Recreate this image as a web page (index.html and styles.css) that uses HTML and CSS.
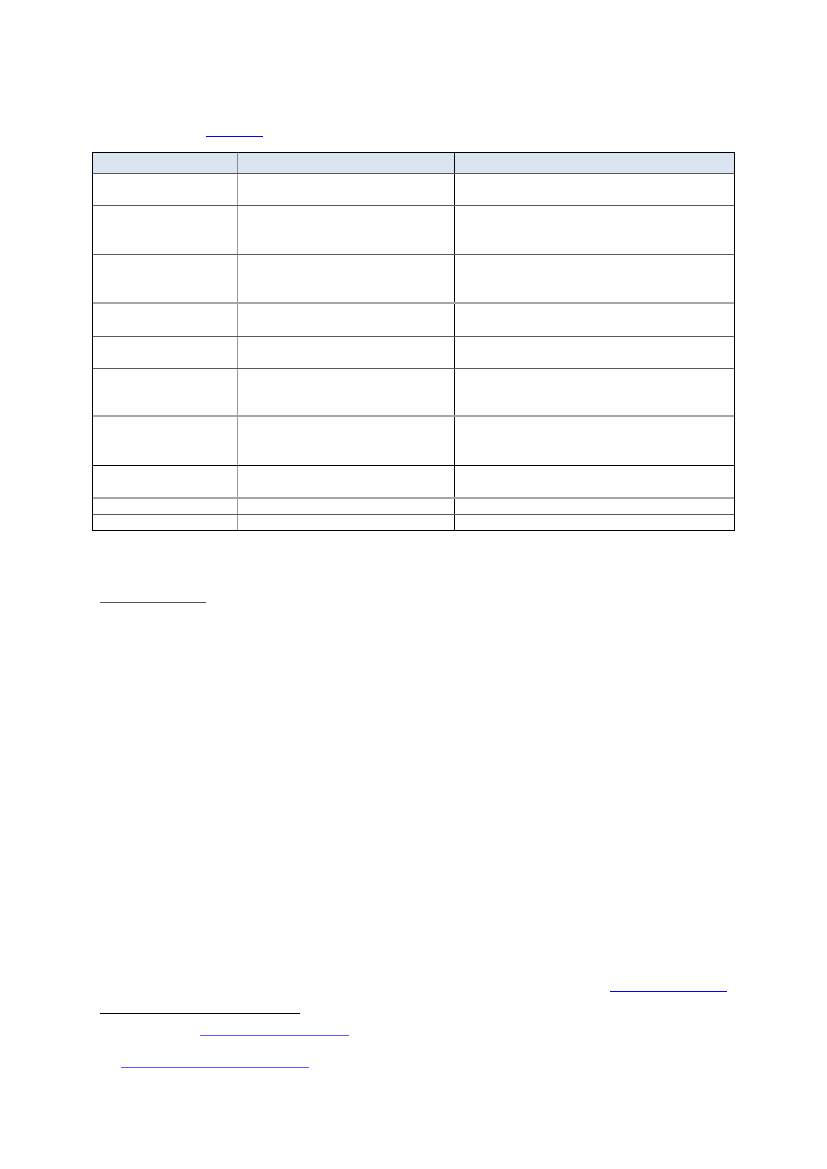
FILE: index.html
```html
<!DOCTYPE html>
<html lang="en">
<head>
<meta charset="utf-8">
<title>Document</title>
<link rel="stylesheet" href="styles.css">
</head>
<body>
<div class="page">
  <div class="rule link-top"></div>
  <div class="table">
    <div class="row head h21"><div class="cell c1"></div><div class="cell c2"></div><div class="cell c3"></div></div>
    <div class="row dark h32"><div class="cell c1"></div><div class="cell c2"></div><div class="cell c3"></div></div>
    <div class="row dark h49"><div class="cell c1"></div><div class="cell c2"></div><div class="cell c3"></div></div>
    <div class="row light h49"><div class="cell c1"></div><div class="cell c2"></div><div class="cell c3"></div></div>
    <div class="row dark h33"><div class="cell c1"></div><div class="cell c2"></div><div class="cell c3"></div></div>
    <div class="row dark h32"><div class="cell c1"></div><div class="cell c2"></div><div class="cell c3"></div></div>
    <div class="row light h48"><div class="cell c1"></div><div class="cell c2"></div><div class="cell c3"></div></div>
    <div class="row black h49"><div class="cell c1"></div><div class="cell c2"></div><div class="cell c3"></div></div>
    <div class="row light h33"><div class="cell c1"></div><div class="cell c2"></div><div class="cell c3"></div></div>
    <div class="row dark h16"><div class="cell c1"></div><div class="cell c2"></div><div class="cell c3"></div></div>
    <div class="row last h15"><div class="cell c1"></div><div class="cell c2"></div><div class="cell c3"></div></div>
  </div>
  <div class="rule footnote-line"></div>
  <div class="rule ref-a"></div>
  <div class="rule ref-b"></div>
  <div class="rule ref-c"></div>
  <div class="rule ref-d"></div>
</div>
</body>
</html>
```
FILE: styles.css
```css
html, body {
  margin: 0;
  padding: 0;
  background: #ffffff;
  font-family: "Liberation Sans", Arial, sans-serif;
}

.page {
  width: 827px;
  min-height: 1169px;
  display: flex;
  flex-direction: column;
  align-items: flex-start;
}

.rule {
  height: 0;
  border-top: 1px solid #0000ff;
}

.link-top {
  margin: 136px 0 0 206px;
  width: 57px;
}

.table {
  margin: 15px 0 0 92px;
  width: 643px;
  box-sizing: border-box;
  border: 1px solid #000000;
  display: flex;
  flex-direction: column;
}

.row {
  display: grid;
  grid-template-columns: 144px 217px 1fr;
  box-sizing: border-box;
}

.cell {
  box-sizing: border-box;
}

.c2 {
  border-left: 1px solid #9a9a9a;
}

.c3 {
  border-left: 1px solid #000000;
}

.head {
  background: #dbe5f1;
  border-bottom: 1px solid #555555;
}

.head .c2 {
  border-left-color: #8a8a8a;
}

.dark {
  border-bottom: 1px solid #5a5a5a;
}

.light {
  border-bottom: 2px solid #a6a6a6;
}

.black {
  border-bottom: 1px solid #000000;
}

.h15 { height: 15px; }
.h16 { height: 16px; }
.h21 { height: 21px; }
.h32 { height: 32px; }
.h33 { height: 33px; }
.h48 { height: 48px; }
.h49 { height: 49px; }

.footnote-line {
  margin: 71px 0 0 100px;
  width: 106px;
  border-top-color: #555555;
}

.ref-a {
  margin: 388px 0 0 610px;
  width: 117px;
}

.ref-b {
  margin: 21px 0 0 100px;
  width: 200px;
  border-top-color: #000000;
}

.ref-c {
  margin: 21px 0 0 200px;
  width: 149px;
  border-top-color: #5a5aff;
}

.ref-d {
  margin: 31px 0 0 121px;
  width: 188px;
  border-top-color: #5a5aff;
}
```
